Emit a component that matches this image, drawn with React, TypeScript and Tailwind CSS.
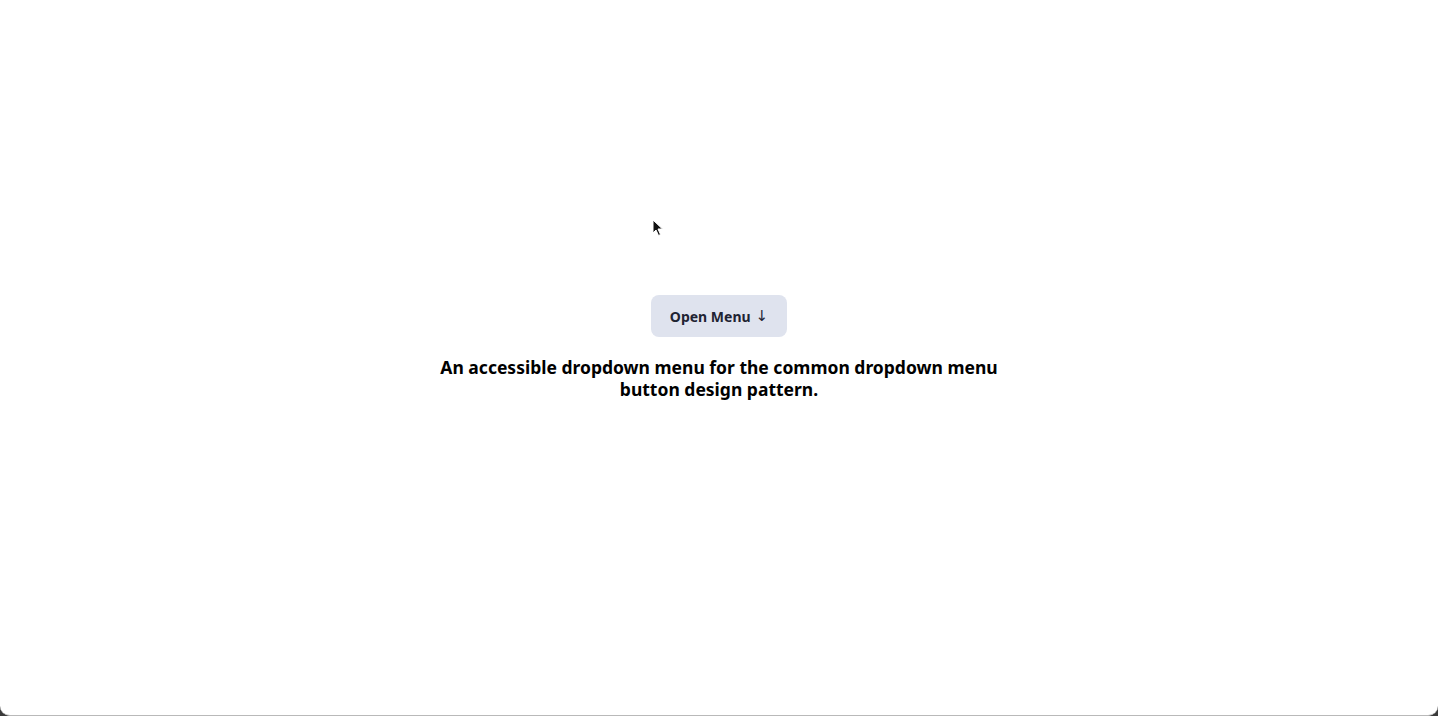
import React from 'react';

export default function App() {
  return (
    <div className="h-[716px] w-full bg-[#3a3a3a]">
      <div className="relative flex h-full flex-col items-center justify-center rounded-b-[10px] border-b border-[#b9b9b9] bg-white pb-[20px] font-['Noto_Sans',sans-serif]">
        {/* mouse pointer from the capture */}
        <svg className="absolute left-[652px] top-[219px]" width="12" height="18" viewBox="0 0 12 18">
          <path d="M1 1 L1 14 L4 11 L6.5 16.5 L8.5 15.5 L6 10 L10.5 10 Z" fill="#111" stroke="#fff" strokeWidth="1" />
        </svg>
        <button className="flex h-[42px] w-[136px] items-center justify-center gap-[5px] rounded-lg bg-[#dfe3ee] text-[14px] font-bold text-[#1f2433]">
          <span>Open Menu</span>
          <span className="font-['DejaVu_Sans',sans-serif] text-[15px] font-normal">↓</span>
        </button>
        <p className="mt-[19px] w-[580px] text-center text-[17.5px] font-bold leading-[22px] text-black">
          An accessible dropdown menu for the common dropdown menu button design pattern.
        </p>
      </div>
    </div>
  );
}
